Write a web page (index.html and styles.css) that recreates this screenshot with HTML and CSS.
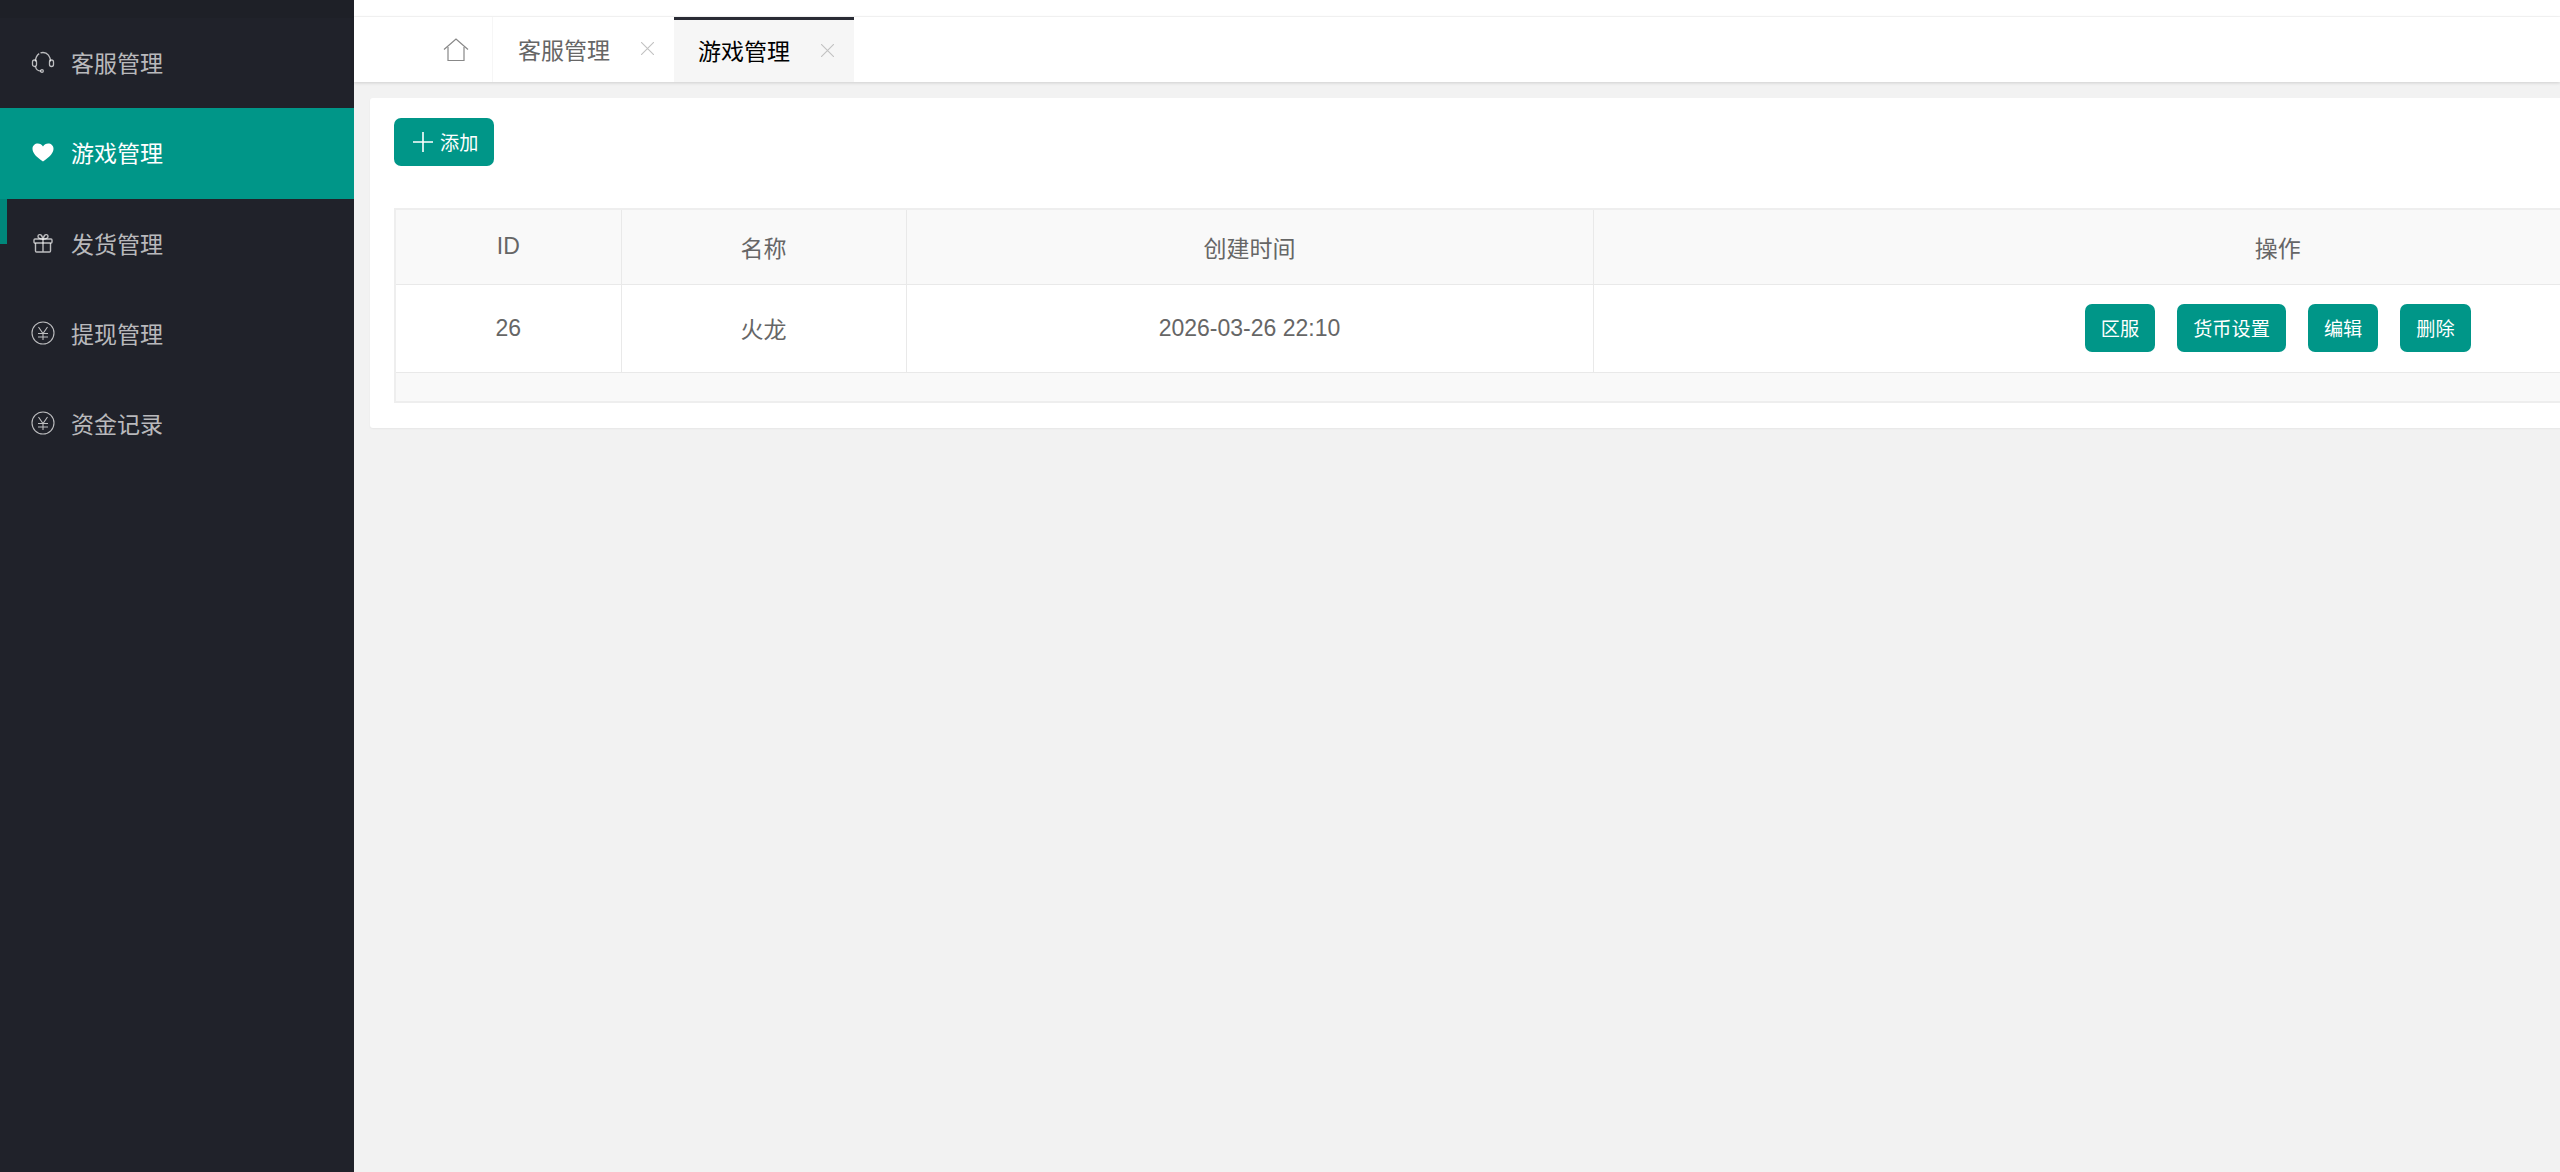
FILE: index.html
```html
<!DOCTYPE html>
<html lang="zh-CN">

<head>
    <meta charset="UTF-8" />
    <title>游戏管理</title>
    <link rel="stylesheet" href="styles.css">
</head>

<body>
    <!-- 左侧菜单 -->
    <div class="side">
        <div class="logo"></div>
        <ul class="menu">
            <li class="menu-item">
                <svg class="menu-icon" viewBox="0 0 24 24" fill="none" stroke="currentColor" stroke-width="1.3">
                    <path d="M4.5 11.5C4.5 6.5 7.5 2.5 12 2.5s7.5 4 7.5 9" stroke-dasharray="9 1.5 30" />
                    <rect x="1.5" y="10" width="4" height="6.5" rx="2" />
                    <rect x="18.5" y="10" width="4" height="6.5" rx="2" />
                    <path d="M4.5 16.500c.5 3 3 4.500 5.500 4.500" />
                    <circle cx="11" cy="21" r="1.300" />
                </svg>
                <span>客服管理</span>
            </li>
            <li class="menu-item active">
                <svg class="menu-icon" viewBox="0 0 24 24" fill="currentColor">
                    <path d="M12 21.500C5 16.500 1.500 13 1.500 8.700 1.500 5.500 4 3.500 6.800 3.500c2.200 0 4.100 1.100 5.200 3 1.100-1.900 3-3 5.200-3 2.800 0 5.300 2 5.300 5.200 0 4.300-3.500 7.800-10.500 12.800z" />
                </svg>
                <span>游戏管理</span>
            </li>
            <li class="menu-item">
                <i class="menu-mark"></i>
                <svg class="menu-icon" viewBox="0 0 24 24" fill="none" stroke="currentColor" stroke-width="1.400">
                    <rect x="3" y="8" width="18" height="4" rx="1" />
                    <path d="M4.500 12v8a1 1 0 0 0 1 1h13a1 1 0 0 0 1-1v-8M12 8v13" />
                    <path d="M12 8C9 8 7 7 7 5.300 7 3.500 9.500 3 10.500 4.500 11.300 5.700 12 8 12 8zm0 0c3 0 5-1 5-2.700 0-1.800-2.500-2.300-3.500-.8C12.700 5.700 12 8 12 8z" />
                </svg>
                <span>发货管理</span>
            </li>
            <li class="menu-item">
                <svg class="menu-icon" viewBox="0 0 24 24" fill="none" stroke="currentColor" stroke-width="1.100">
                    <circle cx="12" cy="12" r="11" />
                    <path d="M7.500 6l4.500 6.500L16.500 6M7 12.500h10M7 16h10M12 12.500V19" />
                </svg>
                <span>提现管理</span>
            </li>
            <li class="menu-item">
                <svg class="menu-icon" viewBox="0 0 24 24" fill="none" stroke="currentColor" stroke-width="1.100">
                    <circle cx="12" cy="12" r="11" />
                    <path d="M7.500 6l4.500 6.500L16.500 6M7 12.500h10M7 16h10M12 12.500V19" />
                </svg>
                <span>资金记录</span>
            </li>
        </ul>
    </div>

    <div class="main">
        <div class="top-line"></div>

        <!-- 标签栏 -->
        <div class="tabs">
            <div class="tab-home">
                <svg class="home-icon" viewBox="0 0 26 24" fill="none" stroke="currentColor" stroke-width="1.200">
                    <path d="M1 11.500L13 1l12 10.500" />
                    <path d="M5 9v13.500h16V9" />
                </svg>
            </div>
            <div class="tab">
                <span>客服管理</span>
                <svg class="tab-close" viewBox="0 0 12 12" stroke="currentColor" stroke-width="1">
                    <path d="M0 0l12 12M12 0L0 12" />
                </svg>
            </div>
            <div class="tab current">
                <span>游戏管理</span>
                <svg class="tab-close" viewBox="0 0 12 12" stroke="currentColor" stroke-width="1">
                    <path d="M0 0l12 12M12 0L0 12" />
                </svg>
            </div>
        </div>

        <div class="body">
            <div class="card">
                <div class="toolbar">
                    <a class="btn btn-add">
                        <svg class="plus-icon" viewBox="0 0 20 20" stroke="currentColor" stroke-width="1.600">
                            <path d="M10 0v20M0 10h20" />
                        </svg>
                        <span>添加</span>
                    </a>
                </div>
                <table class="table">
                    <colgroup>
                        <col class="col-id">
                        <col class="col-name">
                        <col class="col-time">
                        <col class="col-ops">
                    </colgroup>
                    <thead>
                        <tr>
                            <th>ID</th>
                            <th>名称</th>
                            <th>创建时间</th>
                            <th>操作</th>
                        </tr>
                    </thead>
                    <tbody>
                        <tr>
                            <td>26</td>
                            <td>火龙</td>
                            <td>2026-03-26 22:10</td>
                            <td>
                                <div class="ops">
                                    <a class="btn">区服</a>
                                    <a class="btn">货币设置</a>
                                    <a class="btn">编辑</a>
                                    <a class="btn">删除</a>
                                </div>
                            </td>
                        </tr>
                    </tbody>
                    <tfoot>
                        <tr>
                            <td colspan="4" class="table-foot"></td>
                        </tr>
                    </tfoot>
                </table>
            </div>
        </div>
    </div>
</body>

</html>
```

FILE: styles.css
```css
* {
    margin: 0;
    padding: 0;
    box-sizing: border-box;
}

ul {
    list-style: none;
}

html,
body {
    height: 100%;
}

body {
    display: flex;
    overflow: hidden;
    background-color: #f2f2f2;
    color: #666;
    font-family: "Liberation Sans", "Noto Sans CJK SC", sans-serif;
    font-size: 23px;
}

/* 左侧菜单 */
.side {
    flex: 0 0 354px;
    background-color: #20222a;
}

.logo {
    height: 18px;
    background-color: #1e2027;
}

.menu-item {
    position: relative;
    display: flex;
    align-items: center;
    gap: 15px;
    height: 90.25px;
    padding-left: 30px;
    padding-bottom: 2px;
    color: rgba(255, 255, 255, 0.7);
}

.menu-item.active {
    background-color: #009688;
    color: #fff;
}

.menu-icon {
    flex: none;
    width: 26px;
    height: 24px;
}

.menu-mark {
    position: absolute;
    top: 0;
    left: 0;
    width: 7px;
    height: 45px;
    background-color: #00877a;
}

/* 右侧主体 */
.main {
    flex: 1;
    min-width: 0;
    display: flex;
    flex-direction: column;
}

.top-line {
    height: 17px;
    background-color: #fff;
    border-bottom: 1px solid #f6f6f6;
}

.tabs {
    display: flex;
    height: 65px;
    background-color: #fff;
    box-shadow: 0 1px 3px rgba(0, 0, 0, 0.15);
    position: relative;
}

.tab-home {
    display: flex;
    align-items: center;
    justify-content: flex-end;
    width: 139px;
    padding-right: 23px;
    border-right: 1px solid #f6f6f6;
    color: #888;
}

.home-icon {
    width: 26px;
    height: 24px;
}

.tab {
    display: flex;
    align-items: center;
    width: 181px;
    padding-left: 25px;
    padding-bottom: 2px;
    gap: 31px;
    color: #666;
}

.tab.current {
    width: 180px;
    padding-left: 24px;
    background-color: #f6f6f6;
    border-top: 3px solid #292b34;
    color: #000;
}

.tab-close {
    width: 13px;
    height: 13px;
    color: #c2c2c2;
}

.body {
    flex: 1;
    padding: 16px;
    overflow: hidden;
}

.card {
    width: 2620px;
    height: 330px;
    background-color: #fff;
    border-radius: 3px;
    box-shadow: 0 1px 2px rgba(0, 0, 0, 0.05);
    padding: 20px 24px;
}

.toolbar {
    height: 90px;
    display: flex;
    align-items: flex-start;
}

.btn {
    display: inline-flex;
    align-items: center;
    height: 48px;
    padding: 0 16px;
    border-radius: 7px;
    background-color: #009688;
    color: #fff;
    font-size: 19.2px;
}

.btn-add {
    gap: 7px;
    padding: 0 16px 0 19px;
}

.plus-icon {
    width: 20px;
    height: 20px;
}

/* 表格 */
.table {
    table-layout: fixed;
    width: 2568px;
    border-collapse: collapse;
    border: 2px solid #eee;
}

.col-id {
    width: 226px;
}

.col-name {
    width: 285px;
}

.col-time {
    width: 687px;
}

.col-ops {
    width: 1370px;
}

.table th,
.table td {
    border: 1px solid #e9e9e9;
    text-align: center;
    font-weight: normal;
}

.table th {
    height: 75px;
    background-color: #f9f9f9;
}

.table td {
    height: 88px;
}

.table td.table-foot {
    height: 30px;
    background-color: #f9f9f9;
}

.ops {
    display: flex;
    justify-content: center;
    gap: 22px;
}
```
